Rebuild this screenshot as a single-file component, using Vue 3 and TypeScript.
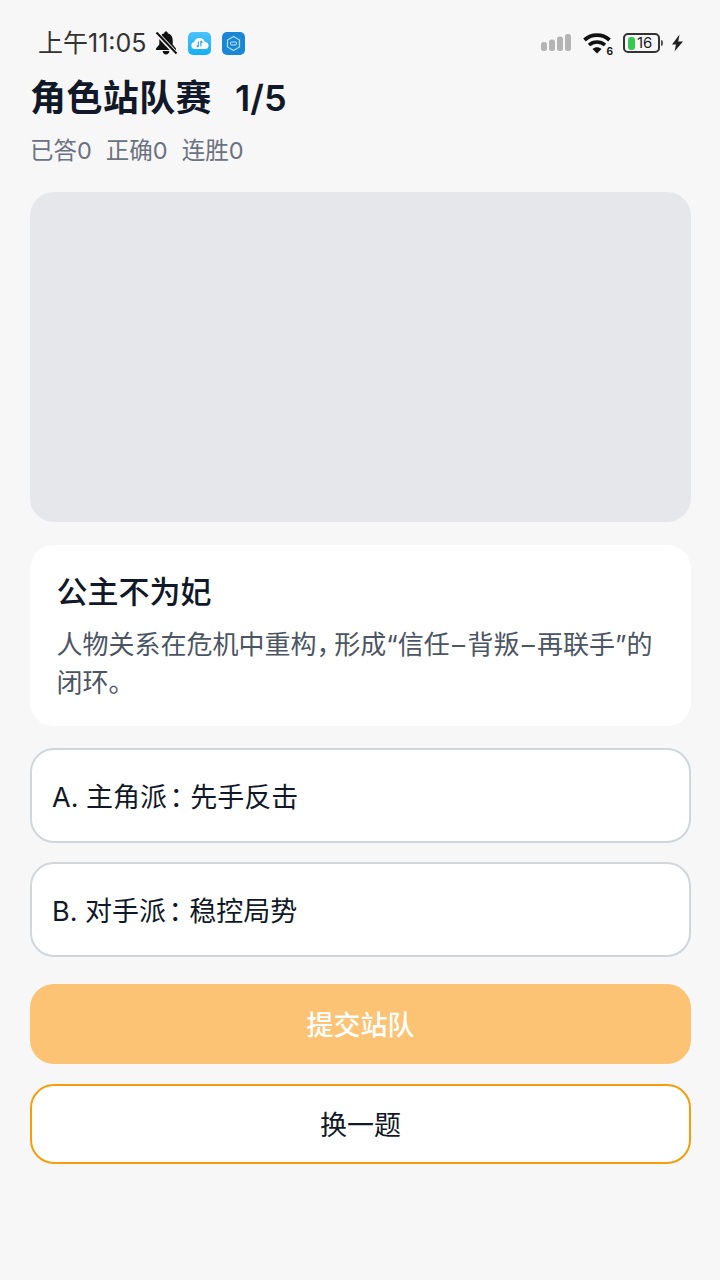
<script setup lang="ts">
const options: string[] = [
  'A. 主角派\u200A：\u2009\u200A先手反击',
  'B. 对手派\u200A：\u2009\u200A稳控局势',
]
const summary: string = '人物关系在危机中重构，\u2009形成“信任\u200A–\u200A背叛\u200A–\u200A再联手”的闭环。'
</script>

<template>
  <div class="page">
    <div class="status">
      <div class="status-left">
        <span class="time">上午11:05</span>
        <svg class="bell" width="24" height="24" viewBox="0 0 24 24">
          <path d="M12 0.500c1 0 1.700.7 1.800 1.700 3.200.9 4.900 3.600 4.900 6.800v4.500l3.300 4v1.500H2v-1.500l3.300-4V9c0-3.200 1.700-5.900 4.900-6.800.1-1 .8-1.700 1.800-1.700z" fill="#111"/>
          <path d="M8.700 20h6.600c0 2.200-1.500 3.500-3.300 3.500s-3.300-1.300-3.300-3.500z" fill="#111"/>
          <path d="M2 1.500l20 21" stroke="#f7f7f8" stroke-width="4.500"/>
          <path d="M2.500 1.500l20 21" stroke="#111" stroke-width="2"/>
        </svg>
        <svg class="app" width="23" height="23" viewBox="0 0 23 23">
          <defs>
            <linearGradient id="cloudBg" x1="0" y1="0" x2="0" y2="1">
              <stop offset="0" stop-color="#4cc3fb"/>
              <stop offset="1" stop-color="#12b0f3"/>
            </linearGradient>
          </defs>
          <rect width="23" height="23" rx="5" fill="url(#cloudBg)"/>
          <path d="M6.500 17a3.500 3.500 0 0 1-.4-6.900 5.600 5.600 0 0 1 10.800-.2 3.550 3.550 0 0 1 .1 7.100z" fill="#fff"/>
          <path d="M10.300 9.500v5.500M10.300 15l-1.500-1.500M12.800 14.500V9M12.800 9l1.500 1.500" stroke="#21a9e8" stroke-width="1.100" fill="none"/>
        </svg>
        <svg class="app" width="23" height="23" viewBox="0 0 23 23">
          <rect width="23" height="23" rx="5" fill="#1a87d4"/>
          <path d="M11.500 4.500l6 3.500v7l-6 3.500-6-3.500V8z" fill="none" stroke="#a8dcf8" stroke-width="1.300"/>
          <rect x="8.500" y="10" width="6" height="3" rx="1" fill="none" stroke="#d5effc" stroke-width=".9"/>
        </svg>
      </div>
      <div class="status-right">
        <svg class="signal" width="32" height="20" viewBox="0 0 32 20">
          <rect x="1" y="9" width="6" height="9" rx="2.500" fill="#b4b4b4"/>
          <rect x="9" y="6.500" width="6" height="11.500" rx="2.500" fill="#b4b4b4"/>
          <rect x="17" y="3.500" width="6" height="14.500" rx="2.500" fill="#b4b4b4"/>
          <rect x="25" y="1" width="6" height="17" rx="2.500" fill="#b4b4b4"/>
        </svg>
        <div class="wifi">
          <svg width="28" height="23" viewBox="0 0 28 23">
            <path d="M1.500 8C8.500 1.500 19.500 1.500 26.500 8" fill="none" stroke="#111" stroke-width="3.800"/>
            <path d="M6 13c4.500-4 11.500-4 16 0" fill="none" stroke="#111" stroke-width="3.600"/>
            <path d="M9.500 17c2.800-2.200 6.200-2.200 9 0l-4.500 4.500z" fill="#111"/>
          </svg>
          <span class="wifi-num">6</span>
        </div>
        <div class="battery">
          <div class="battery-body">
            <span class="battery-fill"></span>
            <span class="battery-num">16</span>
          </div>
          <span class="battery-cap"></span>
        </div>
        <svg class="bolt" width="14" height="20" viewBox="0 0 14 20">
          <path d="M9.500 1.500L2 11.500h4L4.500 18.500 13 8.500H8.300z" fill="#222"/>
        </svg>
      </div>
    </div>

    <h1 class="title">
      <span class="title-name">角色站队赛</span>
      <span>1/5</span>
    </h1>
    <div class="stats">
      <span>已答0</span>
      <span>正确0</span>
      <span>连胜0</span>
    </div>

    <div class="cover"></div>

    <section class="card">
      <h2 class="card-title">公主不为妃</h2>
      <p class="card-text">{{ summary }}</p>
    </section>

    <div class="options">
      <div v-for="option in options" :key="option" class="option">{{ option }}</div>
    </div>

    <div class="actions">
      <button class="btn btn-primary" type="button">提交站队</button>
      <button class="btn btn-outline" type="button">换一题</button>
    </div>
  </div>
</template>

<style>
html, body {
  margin: 0;
  background: #f7f7f8;
}
</style>

<style scoped>
.page {
  box-sizing: border-box;
  width: 720px;
  height: 1280px;
  padding: 26px 29px 0 30px;
  background: #f7f7f8;
  font-family: Inter, "Noto Sans CJK SC", sans-serif;
  color: #111827;
}
.status {
  display: flex;
  align-items: center;
  justify-content: space-between;
  height: 34px;
  padding: 0 7px 0 8px;
}
.status-left, .status-right {
  display: flex;
  align-items: center;
}
.time {
  font-size: 25px;
  line-height: 34px;
  color: #333;
  margin-right: 7px;
}
.bell {
  margin-right: 10px;
}
.app {
  margin-right: 11px;
}
.app:last-child {
  margin-right: 0;
}
.signal {
  margin-right: 11px;
}
.wifi {
  position: relative;
  width: 29px;
  height: 23px;
  margin-right: 11px;
}
.wifi svg {
  display: block;
}
.wifi-num {
  position: absolute;
  right: -1px;
  bottom: -2px;
  font-size: 10px;
  font-weight: 700;
  line-height: 11px;
  color: #111;
}
.battery {
  display: flex;
  align-items: center;
  margin-right: 7px;
}
.battery-body {
  box-sizing: border-box;
  display: flex;
  align-items: center;
  width: 37px;
  height: 20px;
  padding: 2px 3px;
  border: 2px solid #333;
  border-radius: 5px;
}
.battery-fill {
  flex: none;
  width: 7px;
  height: 13px;
  background: #35c94f;
  border-radius: 3px;
}
.battery-num {
  margin-left: 2px;
  font-size: 15px;
  line-height: 16px;
  color: #222;
}
.battery-cap {
  width: 2px;
  height: 6px;
  margin-left: 1px;
  background: #555;
  border-radius: 0 2px 2px 0;
}
.title {
  display: flex;
  gap: 23px;
  margin: 16px 0 0;
  font-size: 36px;
  line-height: 44px;
  font-weight: 600;
  color: #111827;
}
.title-name {
  letter-spacing: 0.4px;
}
.stats {
  display: flex;
  gap: 14px;
  margin: 14px 0 0;
  font-size: 23.500px;
  line-height: 34px;
  color: #6b7280;
}
.cover {
  height: 330px;
  margin-top: 24px;
  border-radius: 24px;
  background: #e5e7eb;
}
.card {
  box-sizing: border-box;
  height: 181px;
  margin-top: 23px;
  padding: 26px 26.500px 0;
  border-radius: 24px;
  background: #fff;
}
.card-title {
  margin: 0;
  font-size: 31px;
  line-height: 42px;
  font-weight: 500;
  color: #111827;
}
.card-text {
  margin: 13px 0 0;
  font-size: 26px;
  line-height: 38px;
  font-feature-settings: "halt";
  color: #4b5563;
}
.options {
  display: flex;
  flex-direction: column;
  gap: 19px;
  margin-top: 22px;
}
.option {
  box-sizing: border-box;
  display: flex;
  align-items: center;
  height: 95px;
  padding: 0 20px 1px;
  border: 2px solid #d0d6d9;
  border-radius: 24px;
  background: #fff;
  font-size: 27px;
  font-feature-settings: "halt";
  color: #111827;
}
.actions {
  display: flex;
  flex-direction: column;
  gap: 20px;
  margin-top: 27px;
}
.btn {
  box-sizing: border-box;
  display: block;
  width: 100%;
  height: 80px;
  padding: 0 0 2px;
  border-radius: 24px;
  font-family: inherit;
  font-size: 27px;
}
.btn-primary {
  border: 0;
  background: #fbc373;
  color: #fff;
  font-weight: 500;
}
.btn-outline {
  border: 2px solid #f59e0b;
  background: #fff;
  color: #111827;
}
</style>
